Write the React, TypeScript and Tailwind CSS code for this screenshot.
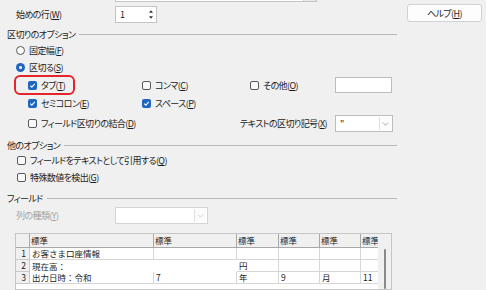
import type { ReactNode } from 'react';

function Check({ checked = false }: { checked?: boolean }) {
  if (checked) {
    return (
      <span className="flex h-[9px] w-[9px] shrink-0 items-center justify-center rounded-[2px] bg-[#1f66c1]">
        <svg viewBox="0 0 10 10" className="h-[7px] w-[7px]">
          <path d="M1.8 5.3 4 7.4 8.3 2.8" fill="none" stroke="#fff" strokeWidth="1.5" />
        </svg>
      </span>
    );
  }

  return <span className="h-[9px] w-[9px] shrink-0 rounded-[2px] border border-[#5a5a5a] bg-[#f9f9f9]" />;
}

function Radio({ checked = false }: { checked?: boolean }) {
  if (checked) {
    return (
      <span className="flex h-[9px] w-[9px] shrink-0 items-center justify-center rounded-full bg-[#1f66c1]">
        <span className="h-[3px] w-[3px] rounded-full bg-white" />
      </span>
    );
  }

  return <span className="h-[9px] w-[9px] shrink-0 rounded-full border border-[#5a5a5a] bg-[#f9f9f9]" />;
}

function Option({ children, checked, radio }: { children: ReactNode; checked?: boolean; radio?: boolean }) {
  return (
    <label className="flex items-center gap-[4px] whitespace-nowrap">
      {radio ? <Radio checked={checked} /> : <Check checked={checked} />}
      <span>{children}</span>
    </label>
  );
}

function GroupTitle({ children, className }: { children: ReactNode; className: string }) {
  return (
    <div className={`flex h-[12px] items-center gap-[4px] ${className}`}>
      <span className="whitespace-nowrap">{children}</span>
      <span className="h-px flex-1 bg-[#b7b7b7]" />
    </div>
  );
}

function Chevron({ color }: { color: string }) {
  return (
    <svg viewBox="0 0 8 5" className="h-[4px] w-[7px]">
      <path d="M0.8 0.8 4 4 7.2 0.8" fill="none" stroke={color} strokeWidth="0.9" />
    </svg>
  );
}

function Combo({ width, value, disabled }: { width: string; value?: string; disabled?: boolean }) {
  return (
    <div
      className={`flex h-[17px] ${width} items-stretch border bg-white p-[1px] ${
        disabled ? 'border-[#d4d4d4]' : 'border-[#bdbdbd]'
      }`}
    >
      <span className="flex-1 pl-[3px] pt-[2px]">{value}</span>
      <span className="flex w-[12px] items-center justify-center border-l border-[#e0e0e0] bg-[#fbfbfb]">
        <Chevron color={disabled ? '#c4c4c4' : '#8c8c8c'} />
      </span>
    </div>
  );
}

const COLS = ['w-[124px]', 'w-[83px]', 'w-[42px]', 'w-[41px]', 'w-[41px]', 'w-[41px]'];

function Row({ num, cells }: { num: string; cells: { text: string; width: string; open?: boolean }[] }) {
  return (
    <div className="flex h-[12px]">
      <div className="flex w-[14px] shrink-0 items-center justify-end border-b border-r border-[#c9c9c9] bg-[#f0f0f0] pr-[3px]">
        {num}
      </div>
      {cells.map((cell, index) => (
        <div
          key={index}
          className={`flex shrink-0 items-center pl-[2px] ${cell.width} ${
            cell.open ? '' : 'border-b border-r border-[#d6d6d6]'
          }`}
        >
          {cell.text}
        </div>
      ))}
    </div>
  );
}

export default function App() {
  return (
    <div className="flex h-[290px] w-[486px] overflow-hidden bg-[#f0f0f0] font-['Noto_Sans_CJK_JP','Noto_Sans',sans-serif] text-[9px] leading-none tracking-[-0.6px] text-[#1b1b1b] [font-feature-settings:'palt']">
      <div className="flex w-[397px] shrink-0 flex-col pl-[7px]">
        <div className="-mt-[14px] ml-[108px] flex h-[17px] w-[202px] justify-end border border-[#c4c4c4] bg-white">
          <span className="w-[13px] border-l border-[#d6d6d6] bg-[#e8e8e8]" />
        </div>

        <div className="mt-[4px] flex h-[17px] items-center">
          <span className="ml-[9px] w-[99px]">
            始めの行(<u>W</u>)
          </span>
          <div className="flex h-[17px] w-[42px] items-center border border-[#c4c4c4] bg-white pl-[4px]">
            <span className="flex-1">1</span>
            <span className="mr-[3px] flex flex-col items-center gap-[3px]">
              <svg viewBox="0 0 6 4" className="h-[3px] w-[4px]">
                <path d="M0 4 3 0 6 4Z" fill="#333" />
              </svg>
              <svg viewBox="0 0 6 4" className="h-[3px] w-[4px]">
                <path d="M0 0 3 4 6 0Z" fill="#333" />
              </svg>
            </span>
          </div>
        </div>

        <GroupTitle className="mt-[6px]">区切りのオプション</GroupTitle>

        <div className="ml-[9px] mt-[4px] flex h-[14px] items-center">
          <Option radio>
            固定幅(<u>F</u>)
          </Option>
        </div>
        <div className="ml-[9px] mt-[4px] flex h-[14px] items-center">
          <Option radio checked>
            区切る(<u>S</u>)
          </Option>
        </div>

        <div className="ml-[21px] mt-[2px] grid h-[20px] grid-cols-[114px_108px_85px_57px] items-center">
          <div className="relative flex h-[20px] items-center">
            <Option checked>
              タブ(<u>T</u>)
            </Option>
            <span className="pointer-events-none absolute -left-[14px] top-0 h-[20px] w-[61px] rounded-[6px] border-2 border-[#e5252a]" />
          </div>
          <Option>
            コンマ(<u>C</u>)
          </Option>
          <Option>
            その他(<u>O</u>)
          </Option>
          <div className="h-[16px] w-[57px] border border-[#bdbdbd] bg-white" />
        </div>

        <div className="ml-[21px] mt-[2px] grid h-[14px] grid-cols-[114px_108px] items-center">
          <Option checked>
            セミコロン(<u>E</u>)
          </Option>
          <Option checked>
            スペース(<u>P</u>)
          </Option>
        </div>

        <div className="ml-[21px] mt-[5px] flex h-[17px] w-[365px] items-center">
          <div className="w-[212px]">
            <Option>
              フィールド区切りの結合(<u>D</u>)
            </Option>
          </div>
          <span className="whitespace-nowrap">
            テキストの区切り記号(<u>X</u>)
          </span>
          <div className="ml-auto">
            <Combo width="w-[58px]" value={'"'} />
          </div>
        </div>

        <GroupTitle className="mt-[8px]">他のオプション</GroupTitle>

        <div className="ml-[10px] mt-[3px] flex h-[14px] items-center">
          <Option>
            フィールドをテキストとして引用する(<u>Q</u>)
          </Option>
        </div>
        <div className="ml-[10px] mt-[4px] flex h-[14px] items-center">
          <Option>
            特殊数値を検出(<u>G</u>)
          </Option>
        </div>

        <GroupTitle className="mt-[9px]">フィールド</GroupTitle>

        <div className="mt-[3px] flex h-[17px] items-center">
          <span className="ml-[9px] w-[99px] text-[#a3a3a3]">
            列の種類(<u>Y</u>)
          </span>
          <Combo width="w-[93px]" disabled />
        </div>

        <div className="ml-[8px] mt-[9px] flex w-[377px] border border-[#c6c6c6] bg-white text-[8.5px] tracking-normal [font-feature-settings:normal]">
          <div className="w-[362px] overflow-hidden">
            <div className="flex h-[14px] border-b border-[#a8a8a8] bg-[#f0f0f0]">
              <div className="w-[14px] shrink-0 border-r border-[#a8a8a8]" />
              {COLS.map((width, index) => (
                <div key={index} className={`flex shrink-0 items-center border-r border-[#a8a8a8] pl-[1px] ${width}`}>
                  標準
                </div>
              ))}
            </div>
            <Row
              num="1"
              cells={[
                { text: 'お客さま口座情報', width: COLS[0] },
                { text: '', width: COLS[1] },
                { text: '', width: COLS[2] },
                { text: '', width: COLS[3] },
                { text: '', width: COLS[4] },
                { text: '', width: COLS[5] },
              ]}
            />
            <Row
              num="2"
              cells={[
                { text: '現在高：', width: 'w-[207px]', open: true },
                { text: '円', width: COLS[2] },
                { text: '', width: COLS[3] },
                { text: '', width: COLS[4] },
                { text: '', width: COLS[5] },
              ]}
            />
            <Row
              num="3"
              cells={[
                { text: '出力日時：令和', width: COLS[0] },
                { text: '7', width: COLS[1] },
                { text: '年', width: COLS[2] },
                { text: '9', width: COLS[3] },
                { text: '月', width: COLS[4] },
                { text: '11', width: COLS[5] },
              ]}
            />
          </div>
          <div className="flex w-[13px] justify-center bg-[#f0f0f0] pt-[14px]">
            <span className="mt-[1px] h-[40px] w-[2px] rounded-full bg-[#8a8a8a]" />
          </div>
        </div>
      </div>

      <div className="pl-[10px] pt-[4px]">
        <button
          type="button"
          className="flex h-[18px] w-[75px] items-center justify-center rounded-[3px] border border-[#d2d2d2] bg-[#fdfdfd]"
        >
          ヘルプ(<u>H</u>)
        </button>
      </div>
    </div>
  );
}
